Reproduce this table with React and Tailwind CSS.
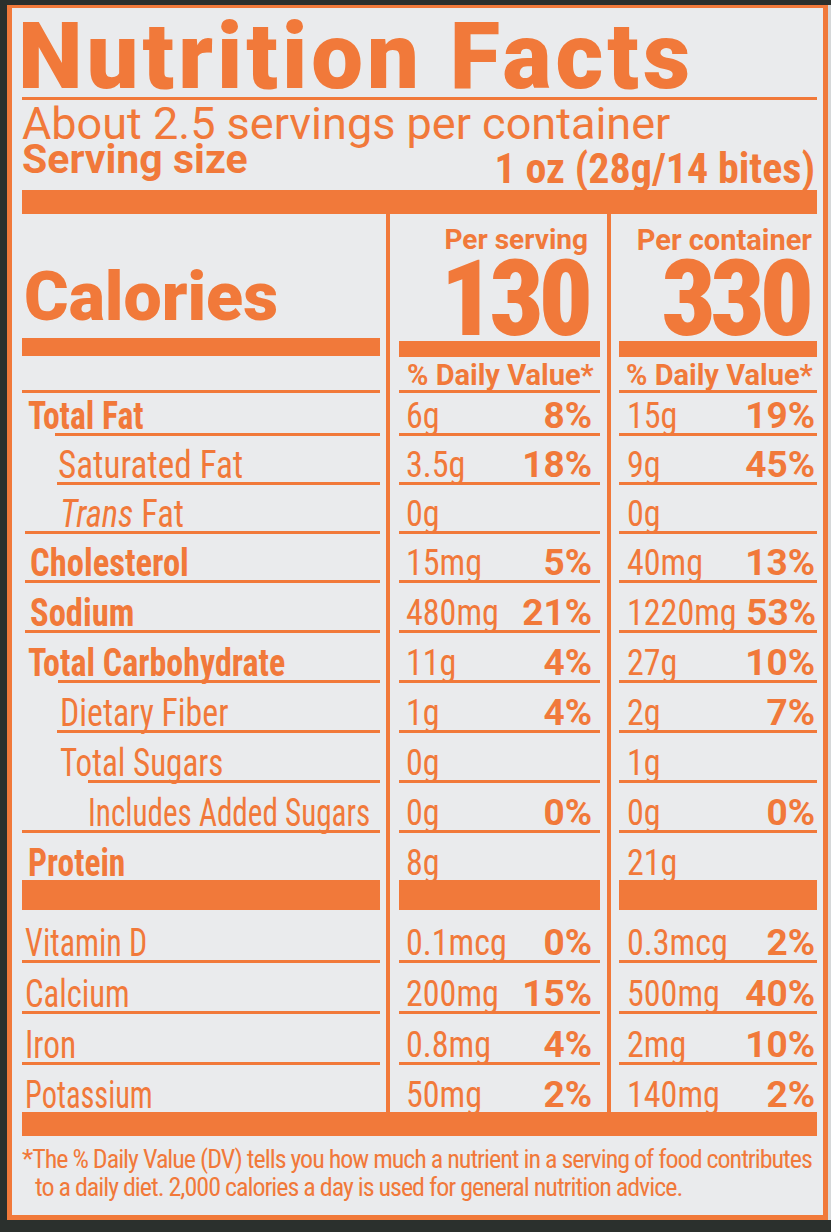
const rows = [
  { label: "Total Fat", bold: true, pad: "pl-[6px]", line: "ml-[33px]", h: "h-[43px]", sx: "scale-x-[0.885]", s: ["6g", "8%"], c: ["15g", "19%"] },
  { label: "Saturated Fat", pad: "pl-[36px]", line: "ml-[35px]", h: "h-[49px]", sx: "scale-x-[0.925]", s: ["3.5g", "18%"], c: ["9g", "45%"] },
  { label: "Fat", trans: true, pad: "pl-[38px]", line: "ml-[3px]", h: "h-[49px]", sx: "scale-x-[0.91]", s: ["0g", ""], c: ["0g", ""] },
  { label: "Cholesterol", bold: true, pad: "pl-[8px]", line: "ml-[3px]", h: "h-[49px]", sx: "scale-x-[0.91]", s: ["15mg", "5%"], c: ["40mg", "13%"] },
  { label: "Sodium", bold: true, pad: "pl-[8px]", line: "ml-[3px]", h: "h-[50px]", sx: "scale-x-[0.91]", s: ["480mg", "21%"], c: ["1220mg", "53%"] },
  { label: "Total Carbohydrate", bold: true, pad: "pl-[6px]", line: "ml-[36px]", h: "h-[50px]", sx: "scale-x-[0.895]", s: ["11g", "4%"], c: ["27g", "10%"] },
  { label: "Dietary Fiber", pad: "pl-[38px]", line: "ml-[35px]", h: "h-[50px]", sx: "scale-x-[0.89]", s: ["1g", "4%"], c: ["2g", "7%"] },
  { label: "Total Sugars", pad: "pl-[38px]", line: "ml-[66px]", h: "h-[50px]", sx: "scale-x-[0.87]", s: ["0g", ""], c: ["1g", ""] },
  { label: "Includes Added Sugars", pad: "pl-[66px]", line: "ml-0", h: "h-[50px]", sx: "scale-x-[0.82]", s: ["0g", "0%"], c: ["0g", "0%"] },
];

const minerals = [
  { label: "Vitamin D", h: "h-[53px]", sx: "scale-x-[0.84]", s: ["0.1mcg", "0%"], c: ["0.3mcg", "2%"], line: true },
  { label: "Calcium", h: "h-[51px]", sx: "scale-x-[0.86]", s: ["200mg", "15%"], c: ["500mg", "40%"], line: true },
  { label: "Iron", h: "h-[51px]", sx: "scale-x-[0.88]", s: ["0.8mg", "4%"], c: ["2mg", "10%"], line: true },
  { label: "Potassium", h: "h-[47px]", sx: "scale-x-[0.8]", s: ["50mg", "2%"], c: ["140mg", "2%"], line: false },
];

function Divider() {
  return <div className="w-[4px] self-stretch bg-[#f1793a]" />;
}

function Amount({ v, wide }) {
  return (
    <div className={`flex flex-1 items-end justify-between pb-[2px] ${wide ? "pl-[8px] pr-[2px]" : "pl-[7px] pr-[8px]"}`}>
      <span className="inline-block origin-left scale-x-[0.92] whitespace-nowrap font-['Roboto_Condensed',sans-serif] text-[37px] leading-[30px]">
        {v[0]}
      </span>
      <span className="text-[37px] font-bold leading-[30px] [font-stretch:92%]">{v[1]}</span>
    </div>
  );
}

function Row({ r, last }) {
  return (
    <div className={`flex ${r.h}`}>
      <div className="flex w-[358px] flex-col">
        <div className={`flex flex-1 items-end pb-[2px] ${r.pad}`}>
          <span
            className={`inline-block origin-left whitespace-nowrap font-['Roboto_Condensed',sans-serif] text-[38px] leading-[30px] ${r.sx} ${r.bold ? "font-bold" : ""}`}
          >
            {r.trans && <span className="italic">Trans </span>}
            {r.label}
          </span>
        </div>
        {!last && <div className={`h-[3px] bg-[#f1793a] ${r.line}`} />}
      </div>
      <div className="ml-[6px] mr-[9px] flex"><Divider /></div>
      <div className="flex w-[201px] flex-col">
        <Amount v={r.s} />
        {!last && <div className="h-[3px] bg-[#f1793a]" />}
      </div>
      <div className="ml-[7px] mr-[8px] flex"><Divider /></div>
      <div className="flex w-[198px] flex-col">
        <Amount v={r.c} wide />
        {!last && <div className="h-[3px] bg-[#f1793a]" />}
      </div>
    </div>
  );
}

export default function App() {
  return (
    <div className="flex h-[1232px] w-[831px] bg-[#2b302d] pb-[12px] pl-[7px] pt-[5px] font-['Roboto',sans-serif] text-[#f1793a]">
      <div className="flex flex-1 flex-col border-[5px] border-t-[3px] border-[#f1793a] bg-[#eaebed] pl-[10px] pr-[6px]">
        <div className="-ml-[4px] mt-[9px] h-[80px] whitespace-nowrap text-[92px] font-black leading-[80px] tracking-[4px]">
          Nutrition Facts
        </div>
        <div className="h-[3px] bg-[#f1793a]" />
        <div className="mt-[2px] h-[44px] whitespace-nowrap text-[45px] leading-[44px]">
          About 2.5 servings per container
        </div>
        <div className="flex h-[44px] items-start justify-between">
          <span className="-mt-[7px] text-[41px] font-bold leading-[41px]">Serving size</span>
          <span className="mt-[2px] pr-[2px] text-[42px] font-bold leading-[42px] [font-stretch:80%]">1 oz (28g/14 bites)</span>
        </div>
        <div className="h-[24px] bg-[#f1793a]" />

        <div className="flex h-[179px]">
          <div className="flex w-[358px] flex-col border-b-[3px] border-[#f1793a]">
            <div className="mt-[50px] h-[67px] pl-[2px] text-[68px] font-black leading-[67px] [font-stretch:88%]">Calories</div>
            <div className="mt-[7px] h-[18px] bg-[#f1793a]" />
          </div>
          <div className="ml-[6px] mr-[9px] flex"><Divider /></div>
          <div className="flex w-[201px] flex-col border-b-[3px] border-[#f1793a]">
            <div className="mt-[12px] h-[28px] whitespace-nowrap pr-[12px] text-right text-[28px] font-bold leading-[28px]">Per serving</div>
            <div className="mt-[5px] h-[80px] pr-[12px] text-right text-[106px] font-black leading-[80px] tracking-[-5px] [font-stretch:82%]">130</div>
            <div className="mt-[2px] h-[16px] bg-[#f1793a]" />
            <div className="mt-[5px] h-[26px] whitespace-nowrap pl-[8px] text-[29px] font-bold leading-[26px]">% Daily Value*</div>
          </div>
          <div className="ml-[7px] mr-[8px] flex"><Divider /></div>
          <div className="flex w-[198px] flex-col border-b-[3px] border-[#f1793a]">
            <div className="mt-[12px] h-[28px] whitespace-nowrap pr-[5px] text-right text-[29px] font-bold leading-[28px]">Per container</div>
            <div className="mt-[5px] h-[80px] pr-[8px] text-right text-[106px] font-black leading-[80px] tracking-[-5px] [font-stretch:82%]">330</div>
            <div className="mt-[2px] h-[16px] bg-[#f1793a]" />
            <div className="mt-[5px] h-[26px] whitespace-nowrap pl-[7px] text-[29px] font-bold leading-[26px]">% Daily Value*</div>
          </div>
        </div>

        {rows.map((r) => (
          <Row key={r.label + r.pad} r={r} />
        ))}
        <Row r={{ label: "Protein", bold: true, pad: "pl-[6px]", h: "h-[47px]", sx: "scale-x-[0.88]", s: ["8g", ""], c: ["21g", ""] }} last />

        <div className="flex h-[30px]">
          <div className="w-[358px] bg-[#f1793a]" />
          <div className="ml-[6px] mr-[9px] flex"><Divider /></div>
          <div className="w-[201px] bg-[#f1793a]" />
          <div className="ml-[7px] mr-[8px] flex"><Divider /></div>
          <div className="w-[198px] bg-[#f1793a]" />
        </div>

        {minerals.map((m) => (
          <Row
            key={m.label}
            r={{ label: m.label, pad: "pl-[3px]", line: "ml-0", h: m.h, sx: m.sx, s: m.s, c: m.c }}
            last={!m.line}
          />
        ))}

        <div className="h-[24px] bg-[#f1793a]" />
        <div className="mt-[9px] text-[26px] leading-[28px] tracking-[-1px] [font-stretch:75%]">
          <div>*The % Daily Value (DV) tells you how much a nutrient in a serving of food contributes</div>
          <div className="pl-[13px]">to a daily diet. 2,000 calories a day is used for general nutrition advice.</div>
        </div>
      </div>
      <div className="w-[4px] bg-[#d6d8d9]" />
    </div>
  );
}
